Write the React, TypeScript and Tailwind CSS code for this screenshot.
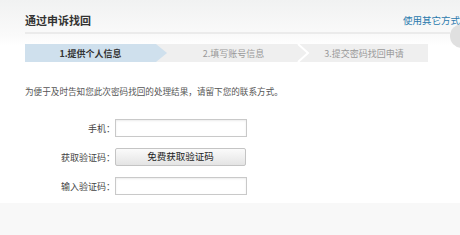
import React from 'react';

const font = "font-['Noto_Sans_CJK_SC','Noto_Sans',sans-serif]";

const Field: React.FC<{ label: string; children: React.ReactNode }> = ({ label, children }) => (
  <div className="flex items-center h-[18px]">
    <span className="w-[90px] text-right text-[9px] text-[#444] leading-none">{label}</span>
    {children}
  </div>
);

const App: React.FC = () => {
  return (
    <div className={`relative w-[460px] h-[235px] overflow-hidden bg-white ${font}`}>
      {/* main panel */}
      <div className="h-[203px] bg-gradient-to-b from-[#f1f2f2] via-[#fafafa] via-[35px] to-white to-[45px]">
        <div className="flex justify-between items-center pt-[13px] pl-[25px]">
          <h1 className="text-[11px] font-bold text-[#333] leading-[14px]">通过申诉找回</h1>
          <a className="text-[9.5px] text-[#2a79ad] leading-[14px] whitespace-nowrap -mr-[19px]">使用其它方式找回</a>
        </div>
        <div className="ml-[25px] mr-[10px] mt-[5px] h-[2px] bg-[#ebebeb]" />

        {/* steps */}
        <div className="relative ml-[25px] mt-[10px] w-[403px] h-[18px] flex bg-[#efefef] text-[9px] leading-none">
          <div className="w-[142px] h-full bg-[#cfe0ed] [clip-path:polygon(0_0,calc(100%-11px)_0,100%_50%,calc(100%-11px)_100%,0_100%)] flex items-center justify-center pr-[11px] font-bold text-[#333]">
            1.提供个人信息
          </div>
          <div className="w-[133px] h-full flex items-center justify-center text-[#999]">2.填写账号信息</div>
          <div className="flex-1 h-full flex items-center justify-center text-[#999]">3.提交密码找回申请</div>
          <svg className="absolute left-[272px] top-0" width="14" height="18" viewBox="0 0 14 18">
            <polyline points="1,0 11,9 1,18" fill="none" stroke="#fff" strokeWidth="2" />
          </svg>
        </div>

        <p className="ml-[25px] mt-[23px] text-[8.6px] text-[#555] leading-[12px]">
          为便于及时告知您此次密码找回的处理结果，请留下您的联系方式。
        </p>

        <div className="ml-[25px] mt-[22px] flex flex-col gap-[11px]">
          <Field label="手机：">
            <input className="w-[132px] h-[18px] border border-[#c9c9c9] shadow-[inset_0_1px_2px_rgba(0,0,0,0.08)] bg-white outline-none" />
          </Field>
          <Field label="获取验证码：">
            <button className="w-[131px] h-[18px] border border-[#c4c4c4] rounded-[2px] bg-gradient-to-b from-[#fbfbfb] to-[#e4e4e4] text-[9.5px] text-[#222] leading-none">
              免费获取验证码
            </button>
          </Field>
          <Field label="输入验证码：">
            <input className="w-[132px] h-[18px] border border-[#c9c9c9] shadow-[inset_0_1px_2px_rgba(0,0,0,0.08)] bg-white outline-none" />
          </Field>
        </div>
      </div>

      {/* footer strip */}
      <div className="h-[32px] bg-[#f8f8f8]" />

      {/* scroll knob at right edge */}
      <div className="absolute right-[-14px] top-[24px] w-[24px] h-[24px] rounded-full bg-[#e0e0e0]" />
    </div>
  );
};

export default App;
